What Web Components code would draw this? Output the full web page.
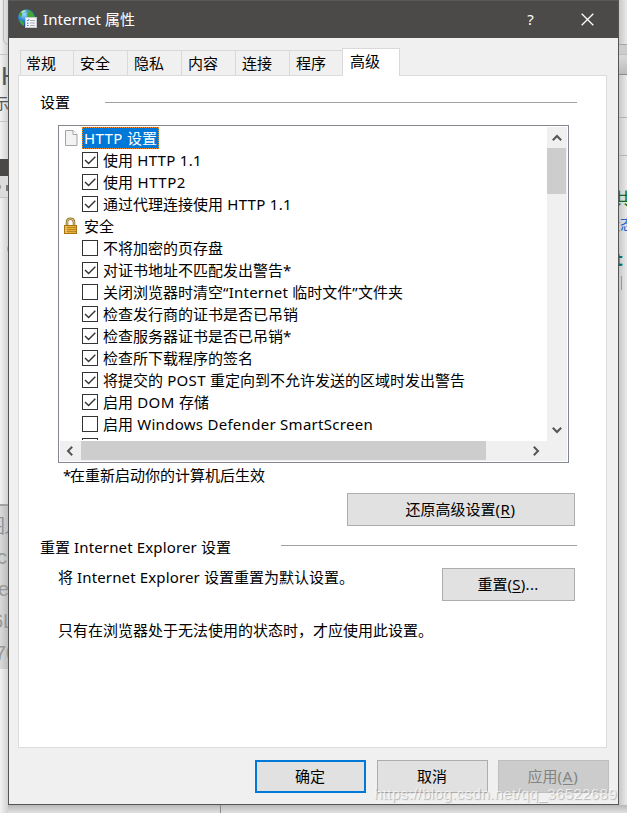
<!DOCTYPE html>
<html lang="zh-CN">
<head>
<meta charset="utf-8">
<title>Internet 属性</title>
<style>
html,body{margin:0;padding:0;width:627px;height:813px;overflow:hidden}
body{position:relative;background:#ececec;font:15px/22px "Noto Sans","Noto Sans CJK SC",sans-serif;color:#000}
</style>
</head>
<body>
<desk-backdrop></desk-backdrop>
<property-dialog></property-dialog>
<script>
const define = (name, html, init) => {
  const t = document.createElement('template');
  t.innerHTML = html;
  customElements.define(name, class extends HTMLElement {
    constructor() {
      super();
      this.attachShadow({mode: 'open'}).appendChild(t.content.cloneNode(true));
    }
    connectedCallback() { if (init) init(this, this.shadowRoot); }
  });
};

/* Mixed Latin/Chinese label; "w" is the target line width, "_X_" an access key. */
define('ui-label', `<style>
:host{display:inline-block;white-space:pre;font-family:"Noto Sans CJK SC",sans-serif;font-size:15px;line-height:22px;height:22px}
.l{font-family:"Noto Sans",sans-serif;font-size:15px;line-height:1}
.k{text-decoration:underline;text-underline-offset:2px;text-decoration-thickness:1px}
</style><span id="s"></span>`, (el, root) => {
  const s = root.getElementById('s');
  const text = el.getAttribute('text');
  s.textContent = '';
  let n = 0;
  for (const run of text.match(/_[A-Z]_|[\x20-\x5e\x60-\x7e“”]+|[^\x20-\x7e“”]+/g)) {
    const p = document.createElement('span');
    const key = /^_[A-Z]_$/.test(run);
    p.textContent = key ? run[1] : run;
    if (key || /^[\x20-\x7e“”]/.test(run)) { p.className = key ? 'l k' : 'l'; n += p.textContent.length; }
    s.appendChild(p);
  }
  const w = +el.getAttribute('w');
  if (w && n) {
    const d = (w - s.getBoundingClientRect().width) / n;
    s.querySelectorAll('.l').forEach(p => p.style.letterSpacing = d + 'px');
  }
});

define('desk-backdrop', `<style>
:host{position:absolute;inset:0;overflow:hidden;background:#ebebeb}
div,span{position:absolute}
.left{left:0;top:0;width:8px;height:813px;background:linear-gradient(90deg,#f2f2f2,#d2d2d2)}
.right{left:619px;top:0;width:8px;height:813px;background:linear-gradient(90deg,#c8c8c8,#eaeaea)}
.bottom{left:8px;top:805px;width:619px;height:8px;background:linear-gradient(#b9b8b9,#e2e1e2)}
span{white-space:nowrap;line-height:22px}
</style>
<div class="left"></div><div class="right"></div><div class="bottom"></div>
<div style="left:3px;top:-6px;width:12px;height:49px;border:1px solid #bbb;border-radius:6px"></div>
<div style="left:0;top:54px;width:8px;height:1px;background:#c6c6c6"></div>
<div style="left:0;top:121px;width:8px;height:1px;background:#c6c6c6"></div>
<div style="left:0;top:159px;width:8px;height:17px;background:#4a4947"></div>
<div style="left:0;top:176px;width:8px;height:21px;background:#dcdcdc;border-bottom:1px solid #c4c4c4"></div>
<div style="left:-2px;top:185px;width:3px;height:4px;border-radius:2px;background:#999"></div>
<div style="left:6px;top:185px;width:3px;height:6px;background:#777"></div>
<div style="left:7px;top:246px;width:4px;height:6px;border-radius:3px;background:#aaa"></div>
<div style="left:0;top:504px;width:8px;height:165px;background:linear-gradient(90deg,#dadada,#bdbdbd);border-top:2px solid #a2a2a2;box-sizing:border-box"></div>
<span style="left:1px;top:65px;color:#525862;font:26px/22px 'Liberation Sans'">H</span>
<span style="left:-6px;top:92px;color:#555;font:15px/22px 'Noto Sans CJK SC'">示</span>
<span style="left:-14px;top:514px;color:#889198;font:19px/22px 'Noto Sans CJK SC'">图</span>
<span style="left:4px;top:514px;color:#889198;font:19px/22px 'Noto Sans CJK SC'">人</span>
<span style="left:-3px;top:546px;color:#989898;font:20px/22px 'Liberation Sans'">c</span>
<span style="left:-2px;top:578px;color:#989898;font:20px/22px 'Liberation Sans'">e</span>
<span style="left:-8px;top:610px;color:#989898;font:20px/22px 'Liberation Sans'">6L</span>
<span style="left:-5px;top:642px;color:#989898;font:20px/22px 'Liberation Sans'">70</span>
<div style="left:619px;top:44px;width:8px;height:1px;background:#a6a6a6"></div>
<div style="left:619px;top:45px;width:8px;height:9px;background:#cdcdcd;border-bottom:1px solid #bdbdbd"></div>
<div style="left:619px;top:55px;width:8px;height:19px;background:linear-gradient(#dadada,#bcbcbc);border-bottom:1px solid #8b8b8b"></div>
<div style="left:619px;top:117px;width:8px;height:1px;background:#b3b3b3"></div>
<div style="left:619px;top:155px;width:8px;height:1px;background:#b3b3b3"></div>
<span style="left:613px;top:188px;color:#0a701c;font:19px/22px 'Noto Sans CJK SC'">共</span>
<span style="left:605px;top:213px;color:#1667cf;font:15px/22px 'Noto Sans CJK SC'">状态</span>
<span style="left:615px;top:248px;color:#08705a;font:bold 18px/22px 'Noto Sans'">t</span>
<div style="left:621px;top:276px;width:1px;height:14px;background:#999"></div>
<div style="left:220px;top:805px;width:1px;height:8px;background:#888"></div>
`);

define('title-bar', `<style>
:host{display:flex;align-items:center;height:38px;background:#4b4a48;color:#fff;box-sizing:border-box;border-top:1px solid #5a5957;padding:0 2px 1px 9px}
svg{display:block}.grow{flex:1}.ico{margin-right:6px}
.q{width:57px;text-align:center;font:15px/22px "Noto Sans";}
.x{width:57px;display:flex;justify-content:center}
</style>
<svg class="ico" width="19" height="20" viewBox="0 0 19 20">
<defs><radialGradient id="g" cx="35%" cy="30%" r="75%"><stop offset="0" stop-color="#9fe0f6"/><stop offset=".45" stop-color="#3189ce"/><stop offset="1" stop-color="#123a82"/></radialGradient></defs>
<circle cx="8.7" cy="8.8" r="8.6" fill="url(#g)"/>
<path d="M1.5 5Q4 1 7 .8L6 3 4 4 4 6 1 9ZM10 .5Q15 2 17 8L15 12 13 9 10 8 9 5 11 3ZM1.5 11L4 12 6 14 6 17Q2 15 1.5 11Z" fill="#43a832"/>
<path d="M3 3Q5 1 8 1L7 2.5 4 4Z" fill="#c0eec0"/>
<rect x="7.5" y="8.5" width="11" height="10" fill="#f4f5f8" stroke="#c4c8cf"/>
<path d="M9 11l.8 1L11 10.2M9 14.2h1.5M9 16.5h1.5" stroke="#3576c8" fill="none"/>
<path d="M12 11.5h5M12 14h5M12 16.5h5" stroke="#a9adb4"/>
</svg>
<ui-label text="Internet 属性" w="92"></ui-label><span class="grow"></span>
<span class="q">?</span>
<span class="x"><svg width="13" height="13" viewBox="0 0 13 13"><path d="M.7.7l11.6 11.6M12.3.7L.7 12.3" stroke="#fff" stroke-width="1.3"/></svg></span>
`);

define('ui-tab', `<style>
:host{display:block;box-sizing:border-box;width:54px;height:25px;border:1px solid #d9d9d9;border-width:1px 0 0 1px;background:#f0f0f0;padding:1px 0 0 6px}
:host([first]){width:53px;padding-left:5px}
:host([last]){width:53px}
:host([selected]){width:58px;height:28px;background:#fff;border-right-width:1px;padding:1px 0 0 7px;margin-bottom:-1px}
</style><slot></slot>`);

define('ui-button', `<style>
:host{display:flex;box-sizing:border-box;width:111px;height:33px;border:1px solid #adadad;background:#e1e1e1;align-items:center;justify-content:center;padding:0 1px 2px 0}
:host([primary]){border:2px solid #0078d7}
:host([disabled]){background:#ccc;border-color:#bfbfbf;color:#838383}
</style><slot></slot>`);

define('group-title', `<style>
:host{display:flex;height:22px;padding:0 29px 0 21px}
i{display:block;flex:1;height:1px;background:#a0a0a0;margin-top:var(--drop,11px);margin-left:var(--gap,35px)}
</style><slot></slot><i></i>`);

define('tree-row', `<style>
:host{display:flex;height:22px;align-items:center;padding-left:22px;flex:none}
:host([head]){padding-left:3px}
.box{box-sizing:border-box;width:16px;height:16px;border:1px solid #333;background:#fff;margin-right:5px;flex:none}
.box svg{display:none}:host([checked]) .box svg{display:block}
:host([head]) .box{display:none}
::slotted(svg){flex:none}
</style><span class="box"><svg width="14" height="14" viewBox="0 0 14 14"><path d="M2 7l3.6 3.5L12.3 3.7" fill="none" stroke="#333" stroke-width="1.4"/></svg></span><slot></slot>`);

define('scroll-bar', `<style>
:host{display:flex;background:#f0f0f0}
:host([vertical]){flex-direction:column;width:20px;height:314px}
:host([horizontal]){width:487px;height:20px}
.a{width:21px;height:20px;display:flex;align-items:center;justify-content:center;flex:none}
:host([vertical]) .a{width:19px;height:21px}
:host([vertical]) .a.b{height:23px}
.t{background:#cdcdcd}
:host([vertical]) .t{width:19px;height:46px}
:host([horizontal]) .t{height:19px;width:405px}
.g{flex:1}svg{display:block}
:host([horizontal]) .b svg{transform:rotate(90deg)}:host([horizontal]) .a.b{margin-right:1px}
:host([horizontal]) .f svg{transform:rotate(-90deg)}:host([horizontal]) .f{margin-left:-1px;margin-right:1px}
:host([vertical]) .b svg{transform:rotate(180deg)}
</style>
<span class="a f"><svg width="10" height="8" viewBox="0 0 10 8"><path d="M.8 6.2L5 2 9.2 6.2" fill="none" stroke="#555" stroke-width="2"/></svg></span>
<span class="t"></span><span class="g"></span>
<span class="a b"><svg width="10" height="8" viewBox="0 0 10 8"><path d="M.8 6.2L5 2 9.2 6.2" fill="none" stroke="#555" stroke-width="2"/></svg></span>`);

define('option-list', `<style>
:host{display:grid;box-sizing:border-box;width:511px;height:338px;border:1px solid #828790;background:#fff;padding:1px;grid-template:314px 20px/487px 20px}
.rows{height:313px;overflow:hidden;display:flex;flex-direction:column}
.c{background:#f0f0f0}
</style><div class="rows"><slot></slot></div><scroll-bar vertical></scroll-bar><scroll-bar horizontal></scroll-bar><span class="c"></span>`);

define('property-dialog', `<style>
:host{position:absolute;left:8px;top:0;width:611px;height:805px;box-sizing:border-box;background:#f0f0f0;border:1px solid #555;border-top:0;display:flex;flex-direction:column}
.tabs{display:flex;align-items:flex-end;height:27px;padding-left:11px;margin-top:10px;position:relative;z-index:1}
.panel{box-sizing:border-box;width:589px;height:673px;margin-left:9px;border:1px solid #dcdcdc;background:#fff;display:flex;flex-direction:column;padding-top:15px}
option-list{margin:12px 0 0 39px;flex:none}
.note{margin:1px 0 0 44px;height:22px}
.restore{width:228px;margin:7px 0 0 328px;flex:none}
.g2{--gap:50px;--drop:9px;margin-top:10px}
.line{display:flex;justify-content:space-between;padding:8px 31px 0 39px;height:34px}
.line ui-button{width:133px;margin-top:2px}
.warn{margin:19px 0 0 39px;height:22px}
.foot{display:flex;margin:12px 0 0 246px;gap:11px}
.foot ui-button:last-child{margin-left:-1px}
.sel{background:#0078d7;color:#fff;outline:1px dotted #f58a23;outline-offset:-1px;padding:0 2px;margin-left:3px;height:22px}
.mark{position:absolute;left:365px;top:783px;font:15px/22px "Liberation Sans";color:rgba(255,255,255,.7);text-shadow:1px 1px 1px rgba(120,120,120,.5);white-space:nowrap}
</style>
<title-bar></title-bar>
<div class="tabs">
<ui-tab first><ui-label text="常规"></ui-label></ui-tab><ui-tab><ui-label text="安全"></ui-label></ui-tab><ui-tab><ui-label text="隐私"></ui-label></ui-tab><ui-tab><ui-label text="内容"></ui-label></ui-tab><ui-tab><ui-label text="连接"></ui-label></ui-tab><ui-tab last><ui-label text="程序"></ui-label></ui-tab><ui-tab selected><ui-label text="高级"></ui-label></ui-tab>
</div>
<div class="panel">
<group-title><ui-label text="设置"></ui-label></group-title>
<option-list>
<tree-row head><svg width="16" height="18" viewBox="0 0 16 18"><path d="M2.5 1.5H10L14 5.5V16.5H2.5Z" fill="#f3f3f3" stroke="#a3a3a3"/><path d="M10 1.5V5.5H14" fill="#fff" stroke="#a3a3a3"/></svg><ui-label class="sel" text="HTTP 设置" w="73"></ui-label></tree-row>
<tree-row checked><ui-label text="使用 HTTP 1.1" w="99"></ui-label></tree-row>
<tree-row checked><ui-label text="使用 HTTP2" w="83"></ui-label></tree-row>
<tree-row checked><ui-label text="通过代理连接使用 HTTP 1.1" w="189"></ui-label></tree-row>
<tree-row head><svg width="16" height="18" viewBox="0 0 16 18" style="margin-right:5px"><path d="M4 9V5.2Q4 1.7 7.5 1.7T11 5.2V9" fill="none" stroke="#8e7431" stroke-width="2.6"/><path d="M4 9V5.2Q4 1.7 7.5 1.7T11 5.2V9" fill="none" stroke="#dfc783" stroke-width="1"/><rect x="1.5" y="8.5" width="12" height="8" fill="#e5b13a" stroke="#a87412"/><path d="M2 10.5h11M2 12.5h11M2 14.5h11" stroke="#bd8720"/><path d="M3 9v7" stroke="#f8da83"/></svg><ui-label text="安全"></ui-label></tree-row>
<tree-row><ui-label text="不将加密的页存盘"></ui-label></tree-row>
<tree-row checked><ui-label text="对证书地址不匹配发出警告*" w="187"></ui-label></tree-row>
<tree-row><ui-label text="关闭浏览器时清空“Internet 临时文件”文件夹" w="300"></ui-label></tree-row>
<tree-row checked><ui-label text="检查发行商的证书是否已吊销"></ui-label></tree-row>
<tree-row checked><ui-label text="检查服务器证书是否已吊销*" w="187"></ui-label></tree-row>
<tree-row checked><ui-label text="检查所下载程序的签名"></ui-label></tree-row>
<tree-row checked><ui-label text="将提交的 POST 重定向到不允许发送的区域时发出警告" w="362"></ui-label></tree-row>
<tree-row checked><ui-label text="启用 DOM 存储" w="106"></ui-label></tree-row>
<tree-row><ui-label text="启用 Windows Defender SmartScreen" w="270"></ui-label></tree-row>
<tree-row></tree-row>
</option-list>
<ui-label class="note" text="*在重新启动你的计算机后生效" w="202"></ui-label>
<ui-button class="restore"><ui-label text="还原高级设置(_R_)" w="110"></ui-label></ui-button>
<group-title class="g2"><ui-label text="重置 Internet Explorer 设置" w="191"></ui-label></group-title>
<div class="line"><ui-label text="将 Internet Explorer 设置重置为默认设置。" w="296"></ui-label><ui-button><ui-label text="重置(_S_)..." w="61"></ui-label></ui-button></div>
<ui-label class="warn" text="只有在浏览器处于无法使用的状态时，才应使用此设置。"></ui-label>
</div>
<div class="foot"><ui-button primary><ui-label text="确定"></ui-label></ui-button><ui-button><ui-label text="取消"></ui-label></ui-button><ui-button disabled><ui-label text="应用(_A_)" w="51"></ui-label></ui-button></div>
<ui-watermark class="mark"></ui-watermark>
`);

define('ui-watermark', `<style>:host{letter-spacing:.39px}</style><span style="letter-spacing:.39px">https://blog.csdn.net/qq_36522689</span>`);
</script>
</body>
</html>
